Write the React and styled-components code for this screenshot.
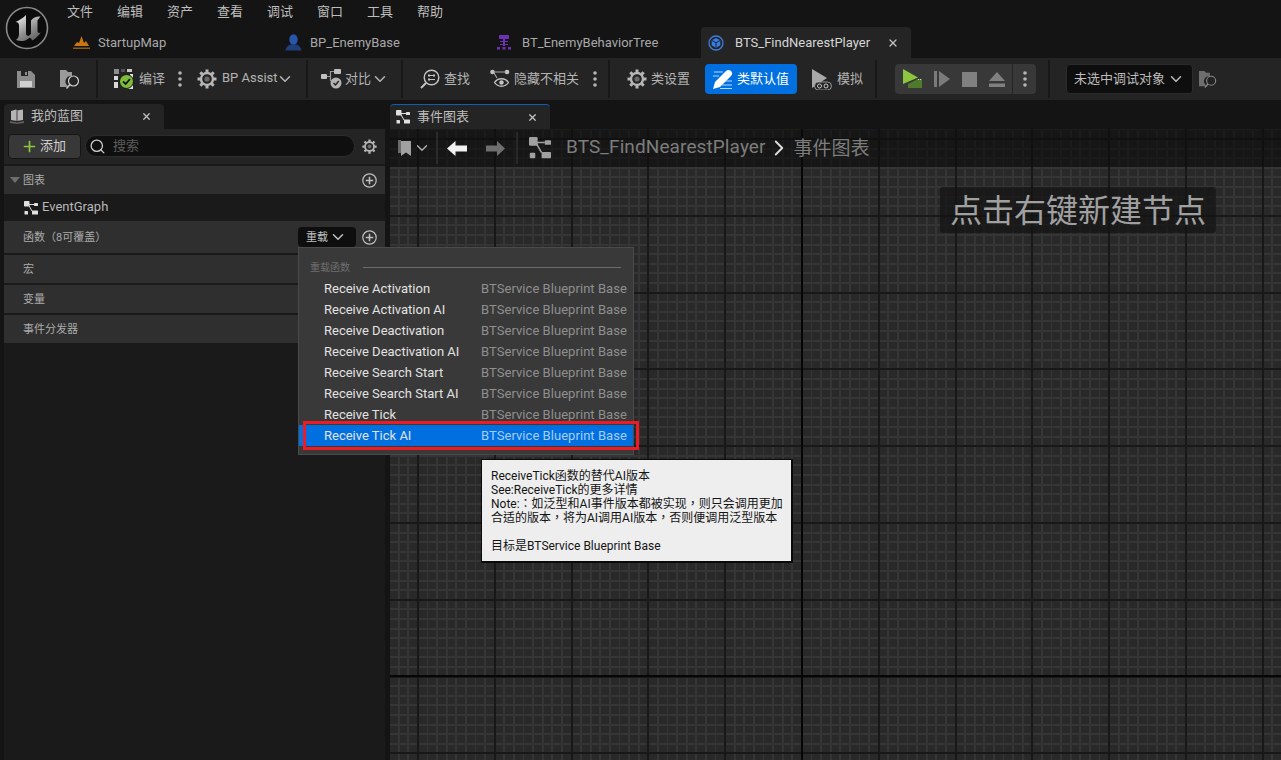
import React from "react";
import styled, { createGlobalStyle } from "styled-components";
import { X, ChevronDown, ChevronRight, Plus, Search } from "lucide-react";

const GlobalStyle = createGlobalStyle`
  html, body { margin: 0; padding: 0; background: #141414; }
  * { box-sizing: border-box; }
`;

const Page = styled.div`
  position: relative;
  width: 1281px;
  height: 760px;
  overflow: hidden;
  background: #141414;
  color: #c0c0c0;
  font-family: Roboto, "Noto Sans CJK SC", sans-serif;
  font-size: 13px;
  text-spacing-trim: space-all;
  display: flex;
  flex-direction: column;
`;

/* title area */
const TitleBar = styled.header`
  height: 58px;
  display: flex;
  flex: none;
`;
const LogoCell = styled.div`
  width: 65px;
  flex: none;
  padding: 6px 0 0 5px;
`;
const TitleRight = styled.div`
  display: flex;
  flex-direction: column;
`;
const MenuBar = styled.nav`
  height: 27px;
  display: flex;
  gap: 24px;
  padding: 0 0 6px 2px;
  align-items: center;
`;
const MenuItem = styled.span`
  font-size: 13px;
  color: #bdbdbd;
  width: 26px;
  white-space: nowrap;
`;
const DocTabs = styled.div`
  display: flex;
  gap: 2px;
  height: 31px;
`;
const DocTab = styled.div`
  width: 210px;
  display: flex;
  align-items: center;
  padding-left: ${(p) => (p.$active ? 7 : 8)}px;
  border-radius: 4px 4px 0 0;
  font-size: 13px;
  background: ${(p) => (p.$active ? "#242424" : "transparent")};
  color: ${(p) => (p.$active ? "#d6d6d6" : "#a8a8a8")};
  svg { flex: none; }
`;
const DocTabLabel = styled.span`
  margin-left: ${(p) => p.$gap || 8}px;
  white-space: nowrap;
  flex: 1;
`;
const CloseBtn = styled(X)`
  color: #c4c4c4;
  margin-right: ${(p) => p.$right || 0}px;
`;

/* toolbar */
const Toolbar = styled.div`
  height: 42px;
  flex: none;
  display: flex;
  background: #242424;
`;
const ToolSection = styled.div`
  width: ${(p) => p.$w}px;
  flex: ${(p) => (p.$grow ? "1" : "none")};
  padding-left: ${(p) => p.$pl}px;
  gap: ${(p) => p.$gap || 0}px;
  display: flex;
  align-items: center;
  border-right: ${(p) => (p.$grow ? "none" : "2px solid #181818")};
  margin: 2px 0;
`;
const ToolItem = styled.div`
  display: flex;
  align-items: center;
  gap: ${(p) => p.$gap ?? 4}px;
  margin-left: ${(p) => p.$ml || 0}px;
  color: #b4b4b4;
  font-size: 13px;
  white-space: nowrap;
  svg { flex: none; }
`;
const ToolLabel = styled.span`
  margin-bottom: 4px;
  white-space: nowrap;
`;
const ToolChevron = styled(ChevronDown)`
  margin-left: ${(p) => p.$ml || 0}px;
  flex: none;
`;
const DotsSlot = styled.span`
  display: flex;
  margin-left: ${(p) => p.$ml || 0}px;
`;
const ActiveButton = styled.div`
  width: 92px;
  height: 30px;
  border-radius: 4px;
  background: #0070e0;
  color: #fff;
  font-size: 13px;
  padding-left: 8px;
  display: flex;
  align-items: center;
  gap: 4px;
  white-space: nowrap;
`;
const PlayGroup = styled.div`
  width: 141px;
  height: 30px;
  background: #383838;
  border-radius: 4px;
  display: flex;
  align-items: center;
`;
const PlayIcons = styled.div`
  width: 118px;
  height: 100%;
  padding-left: 8px;
  display: flex;
  align-items: center;
  gap: 12px;
  border-right: 1px solid #242424;
`;
const PlayMore = styled.div`
  flex: 1;
  display: flex;
  justify-content: center;
`;
const DebugSelect = styled.div`
  width: 127px;
  height: 30px;
  background: #0e0e0e;
  border: 1px solid #2b2b2b;
  border-radius: 4px;
  padding-left: 7px;
  display: flex;
  align-items: center;
  gap: 4px;
  color: #bcbcbc;
  font-size: 13px;
  white-space: nowrap;
`;

/* main */
const Main = styled.div`
  flex: 1;
  display: flex;
  min-height: 0;
`;
const LeftColumn = styled.aside`
  width: 385px;
  flex: none;
  padding: 4px 0 0 4px;
  display: flex;
  flex-direction: column;
`;
const RightColumn = styled.section`
  flex: 1;
  margin-left: 5px;
  padding-top: 4px;
  display: flex;
  flex-direction: column;
  min-width: 0;
`;
const PanelTab = styled.div`
  width: 160px;
  height: 25px;
  flex: none;
  background: #242424;
  border-radius: 4px 4px 0 0;
  border-top: ${(p) => (p.$accent ? "1px solid #0b5fb8" : "none")};
  display: flex;
  align-items: center;
  padding-left: 6px;
  font-size: 13px;
  color: #bdbdbd;
  white-space: nowrap;
`;
const PanelTabLabel = styled.span`
  margin-left: ${(p) => p.$gap}px;
  margin-bottom: 4px;
  flex: 1;
`;
const PanelBody = styled.div`
  flex: 1;
  background: #1a1a1a;
  display: flex;
  flex-direction: column;
`;
const PanelToolbar = styled.div`
  height: 35px;
  background: #242424;
  padding: 0 8px 1px 4px;
  margin-bottom: 2px;
  display: flex;
  align-items: center;
  gap: 4px;
`;
const AddButton = styled.div`
  width: 73px;
  height: 25px;
  background: #383838;
  border: 1px solid #151515;
  border-radius: 4px;
  display: flex;
  align-items: center;
  padding-left: 12px;
  gap: 2px;
  font-size: 13px;
  color: #d0d0d0;
`;
const SearchBox = styled.div`
  flex: 1;
  height: 22px;
  background: #0f0f0f;
  border: 1px solid #2c2c2c;
  border-radius: 11px;
  display: flex;
  align-items: center;
  padding-left: 3px;
  gap: 7px;
  font-size: 13px;
  color: #5c5c5c;
`;
const SettingsSlot = styled.div`
  width: 15px;
  margin-left: 3px;
  display: flex;
  justify-content: center;
`;
const SectionRow = styled.div`
  height: ${(p) => p.$h || 28}px;
  margin-bottom: ${(p) => p.$mb || 0}px;
  background: #2f2f2f;
  display: flex;
  align-items: center;
  padding-left: ${(p) => p.$pl || 19}px;
  padding-right: 8px;
  font-size: 11px;
  color: #ababab;
`;
const SectionLabel = styled.span`
  flex: 1;
  margin-left: ${(p) => p.$ml || 0}px;
  margin-bottom: 2px;
  white-space: nowrap;
`;
const TreeRow = styled.div`
  height: 27px;
  display: flex;
  align-items: center;
  padding-left: 20px;
  gap: 4px;
  font-size: 13px;
  color: #b8b8b8;
`;
const TreeLabel = styled.span`
  margin-bottom: 2px;
`;
const OverrideButton = styled.div`
  width: 58px;
  height: 20px;
  background: #0e0e0e;
  border-radius: 4px;
  margin-right: 6px;
  display: flex;
  align-items: center;
  padding-left: 8px;
  gap: 3px;
  color: #c0c0c0;
  font-size: 11px;
  svg { flex: none; }
`;

/* graph */
const GraphCanvas = styled.div`
  position: relative;
  flex: 1;
  background-color: #292929;
  background-image:
    repeating-linear-gradient(90deg, transparent 0 411px, #060606 411px 413px, transparent 413px 614.4px),
    repeating-linear-gradient(180deg, transparent 0 546px, #060606 546px 548px, transparent 548px 614.4px),
    repeating-linear-gradient(90deg, transparent 0 27px, #181818 27px 29px, transparent 29px 76.8px),
    repeating-linear-gradient(180deg, transparent 0 9px, #181818 9px 11px, transparent 11px 76.8px),
    repeating-linear-gradient(90deg, transparent 0 7.8px, #353535 7.8px 9.6px),
    repeating-linear-gradient(180deg, #353535 0 1.4px, transparent 1.4px 9px, #353535 9px 9.6px);
`;
const Breadcrumb = styled.div`
  position: absolute;
  top: 0;
  left: 0;
  right: 0;
  height: 38px;
  background: rgba(12, 12, 12, 0.62);
  display: flex;
  align-items: center;
  padding-left: 8px;
  font-size: 19px;
  color: #7d7d7d;
  svg { flex: none; }
`;
const CrumbDivider = styled.span`
  width: 2px;
  height: 32px;
  background: rgba(60, 60, 60, 0.5);
  margin: 0 ${(p) => p.$r}px 0 ${(p) => p.$l}px;
`;
const CrumbText = styled.span`
  white-space: nowrap;
  margin-left: ${(p) => p.$ml || 0}px;
  margin-bottom: 4px;
  letter-spacing: ${(p) => p.$ls || 0}px;
`;
const CrumbCaret = styled(ChevronDown)`
  margin-left: 2px;
`;
const CrumbArrow = styled.svg`
  margin-left: ${(p) => p.$ml || 0}px;
`;
const CrumbChevron = styled(ChevronRight)`
  margin: 0 2px 0 0;
`;
const Hint = styled.div`
  position: absolute;
  top: 58px;
  right: 65px;
  height: 46px;
  width: 276px;
  padding-bottom: 4px;
  display: flex;
  align-items: center;
  justify-content: center;
  border-radius: 3px;
  background: rgba(20, 20, 20, 0.72);
  color: #a0a0a0;
  font-size: 32px;
  white-space: nowrap;
`;

/* override menu */
const Popup = styled.div`
  position: absolute;
  left: 298px;
  top: 247px;
  width: 336px;
  height: 208px;
  background: #393939;
  border: 1px solid #4a4a4a;
  display: flex;
  flex-direction: column;
`;
const PopupHeading = styled.div`
  height: 30px;
  flex: none;
  display: flex;
  align-items: center;
  padding: 6px 12px 0 11px;
  gap: 13px;
  font-size: 10px;
  color: #6e6e6e;
  white-space: nowrap;
`;
const HeadingRule = styled.span`
  flex: 1;
  height: 1px;
  margin-top: 2px;
  background: #6a6a6a;
`;
const PopupRow = styled.div`
  height: 21px;
  flex: none;
  display: flex;
  align-items: center;
  padding-left: 25px;
  background: ${(p) => (p.$selected ? "#0070e0" : "transparent")};
  font-size: 13px;
  white-space: nowrap;
`;
const RowName = styled.span`
  width: 157px;
  color: #e2e2e2;
`;
const RowOwner = styled.span`
  color: ${(p) => (p.$selected ? "#a8cdf5" : "#8f8f8f")};
  letter-spacing: 0.05px;
`;
const RedMark = styled.div`
  position: absolute;
  left: 4px;
  top: 173px;
  width: 336px;
  height: 29px;
  border: 3px solid #ed1c24;
  pointer-events: none;
`;
const Tip = styled.div`
  position: absolute;
  left: 481px;
  top: 459px;
  width: 312px;
  height: 104px;
  background: #eeeeee;
  border: 2px solid #0a0a0a;
  border-top-width: 1px;
  border-left-width: 1px;
  padding: 9px 0 0 9px;
  color: #141414;
  font-family: Roboto, "Noto Sans CJK TC", sans-serif;
  font-size: 12px;
  line-height: 14px;
  white-space: pre-line;
`;

/* drawn icons */
const LogoMark = () => (
  <svg width="44" height="44" viewBox="0 0 44 44">
    <defs>
      <linearGradient id="ueGrad" x1="0.2" y1="0" x2="0.8" y2="1">
        <stop offset="0" stopColor="#e8e8e8" />
        <stop offset="0.6" stopColor="#8c8c8c" />
        <stop offset="1" stopColor="#5c5c5c" />
      </linearGradient>
    </defs>
    <circle cx="22" cy="22" r="20.5" fill="#0c0c0c" stroke="#8a8a8a" strokeWidth="1.6" />
    <path
      d="M21 9C18 12 14 14.500 10.500 16C13 16 14 17.500 14 19.500L14 28C14 30.500 13 32.500 11 34C15 35.500 19 35.500 22 33.500L25 31.500L27.500 34.500C30.500 32.500 33.500 30 35.700 26.500C34 27.500 32.500 27 32.500 25L32.500 14.500L35.500 10.500C31.500 10 28.500 11.500 26 14.500L26 28L23.500 30C22 30 21 29 21 27.500Z"
      fill="url(#ueGrad)"
    />
  </svg>
);
const MapIcon = () => (
  <svg width="17" height="15" viewBox="0 0 17 15" fill="#c9780f">
    <path d="M1 11 L4 7 L6 8 L8.500 1 L11 8 L13 6 L16 11Z" />
    <rect x="0" y="12.500" width="17" height="1.500" fill="#8a5a14" />
  </svg>
);
const PawnIcon = () => (
  <svg width="17" height="17" viewBox="0 0 17 17" fill="#2756ad">
    <ellipse cx="8.500" cy="5.500" rx="4.200" ry="5.200" />
    <path d="M0.500 16.500C1 12.500 4 11 6 10.500L11 10.500C13 11 16 12.500 16.500 16.500Z" fill="#1f3f7c" />
  </svg>
);
const TreeIcon = () => (
  <svg width="14" height="15" viewBox="0 0 14 15" fill="#6d30b5">
    <rect x="2" y="0" width="10" height="4" />
    <rect x="6" y="4" width="2" height="7" />
    <path d="M3 6H11V7H3ZM3 9H11V10H3Z" />
    <rect x="0" y="12" width="3" height="2.500" />
    <rect x="5.500" y="12" width="3" height="2.500" />
    <rect x="11" y="12" width="3" height="2.500" />
  </svg>
);
const ServiceIcon = () => (
  <svg width="16" height="16" viewBox="0 0 16 16" fill="none">
    <circle cx="8" cy="8" r="7" stroke="#3c7de0" strokeWidth="1.300" />
    <path d="M8 3L12.300 5.300V10.300L8 13L3.700 10.300V5.300Z" fill="#3c7de0" />
    <path d="M4 5.500L8 7.800L12 5.500M8 7.800V12.800" stroke="#10233f" strokeWidth="1" />
  </svg>
);
const SaveIcon = () => (
  <svg width="18" height="18" viewBox="0 0 18 18">
    <path d="M0 1H14L18 5V18H0Z" fill="#8c8c8c" />
    <rect x="4" y="1" width="7" height="5" fill="#242424" />
    <rect x="8" y="2" width="2" height="3" fill="#8c8c8c" />
    <rect x="3" y="11" width="12" height="6" fill="#d0d0d0" />
  </svg>
);
const FolderSearchIcon = ({ size = 20, fill = "#9a9a9a", lens = "#d0d0d0" }) => (
  <svg width={size} height={size} viewBox="0 0 20 20" fill="none">
    <path d="M0 1H6L8 3H12V7A5.500 5.500 0 0 0 8 17L6 18H0Z" fill={fill} />
    <circle cx="13.500" cy="12" r="5" stroke={lens} strokeWidth="1.200" />
    <path d="M10 15.500L6.500 19.500" stroke={lens} strokeWidth="1.500" />
  </svg>
);
const CompileIcon = () => (
  <svg width="20" height="20" viewBox="0 0 20 20">
    <g fill="#8d8d8d">
      <rect x="0" y="0" width="5" height="5" />
      <rect x="13" y="0" width="5" height="3" fill="#c8c8c8" />
      <rect x="7" y="0" width="4" height="3" fill="#555" />
      <rect x="0" y="7" width="4" height="4" fill="#d8d8d8" />
      <rect x="0" y="13" width="4" height="6" fill="#d8d8d8" />
      <rect x="16" y="5" width="3" height="4" fill="#e0e0e0" />
      <rect x="13" y="16" width="6" height="4" fill="#e0e0e0" />
    </g>
    <circle cx="12.500" cy="12.500" r="7" fill="#7ebd3a" stroke="#111" strokeWidth="1" />
    <path d="M9 12.500L11.700 15L16 10" fill="none" stroke="#111" strokeWidth="1.800" />
  </svg>
);
const Dots = () => (
  <svg width="6" height="18" viewBox="0 0 6 18" fill="#b4b4b4">
    <circle cx="3" cy="3" r="1.800" />
    <circle cx="3" cy="9" r="1.800" />
    <circle cx="3" cy="15" r="1.800" />
  </svg>
);
const GearIcon = ({ size = 20, color = "#b6b6b6" }) => (
  <svg width={size} height={size} viewBox="0 0 20 20" fill="none">
    <circle cx="10" cy="10" r="6" stroke={color} strokeWidth="2.400" />
    <circle cx="10" cy="10" r="2.600" fill="#6a6a6a" />
    <g stroke={color} strokeWidth="3">
      <path d="M10 0.500V3.500M10 16.500V19.500M0.500 10H3.500M16.500 10H19.500M3.300 3.300L5.400 5.400M14.600 14.600L16.700 16.700M3.300 16.700L5.400 14.600M14.600 5.400L16.700 3.300" />
    </g>
  </svg>
);
const DiffIcon = () => (
  <svg width="21" height="20" viewBox="0 0 21 20" fill="none">
    <rect x="0" y="5" width="6" height="5" rx="1" fill="#c0c0c0" />
    <rect x="13" y="0" width="7" height="5" rx="1" fill="#c0c0c0" />
    <path d="M6 7.500H9.500V2.500H13M9.500 7.500V12" stroke="#9a9a9a" strokeWidth="1.200" />
    <circle cx="15" cy="14" r="5.500" fill="#b4b4b4" />
    <path d="M12.500 14L14.500 16L17.800 12" stroke="#242424" strokeWidth="1.500" />
  </svg>
);
const FindIcon = () => (
  <svg width="20" height="20" viewBox="0 0 20 20" fill="none">
    <circle cx="11.500" cy="8.500" r="7.300" stroke="#c4c4c4" strokeWidth="1.400" />
    <path d="M6 14L1 19" stroke="#c4c4c4" strokeWidth="2" />
    <path d="M8 5.500H10V7.500H8ZM13 5.500H15V7.500H13ZM8 9.500H10V11.500H8Z" fill="#c4c4c4" />
    <path d="M10 6.500H13M10 10.500H15" stroke="#c4c4c4" strokeWidth="1" />
  </svg>
);
const HideIcon = () => (
  <svg width="20" height="20" viewBox="0 0 20 20" fill="none">
    <circle cx="2.500" cy="3" r="2.300" fill="#c4c4c4" />
    <circle cx="17" cy="3" r="2.300" fill="#c4c4c4" />
    <path d="M2.500 3H17M4 4L7 9" stroke="#aaa" strokeWidth="1.100" />
    <path d="M4.500 13.500C8 8.500 15 8.500 18.500 13.500C15 18.500 8 18.500 4.500 13.500Z" stroke="#c4c4c4" strokeWidth="1.300" />
    <circle cx="11.500" cy="13.500" r="2.200" fill="#c4c4c4" />
  </svg>
);
const PencilIcon = () => (
  <svg width="20" height="20" viewBox="0 0 20 20" fill="none">
    <path d="M0 20L2 13L13 2C14.500 0.500 16.500 0.500 18 2C19.500 3.500 19.500 5.500 18 7L7 18Z" fill="#fff" />
    <path d="M1 3H10M0 7H6M12 12H19M9 16H19M7 19.500H19" stroke="#cfe3fa" strokeWidth="0.900" />
  </svg>
);
const SimIcon = () => (
  <svg width="20" height="21" viewBox="0 0 20 21">
    <path d="M0 0L15 9L0 19Z" fill="#a8a8a8" />
    <rect x="2.500" y="13" width="17" height="8" rx="4" fill="#242424" stroke="#b0b0b0" strokeWidth="0.800" />
    <circle cx="7.500" cy="17" r="2" fill="none" stroke="#c8c8c8" strokeWidth="1" />
    <circle cx="14" cy="17" r="2" fill="none" stroke="#c8c8c8" strokeWidth="1" />
  </svg>
);
const PlayIcon = () => (
  <svg width="19" height="20" viewBox="0 0 19 20">
    <path d="M0 0L15 8.500L0 15Z" fill="#8cc63f" />
    <path d="M5 15L15 10H19V19H5Z" fill="#4f7a2c" />
    <path d="M15 10.500H19" stroke="#cfe6a8" strokeWidth="1" strokeDasharray="1 1" />
  </svg>
);
const StepIcon = () => (
  <svg width="16" height="16" viewBox="0 0 16 16" fill="#7b7b7b">
    <rect x="0" y="0" width="3" height="16" />
    <path d="M5 0L16 8L5 16Z" />
  </svg>
);
const StopIcon = () => (
  <svg width="15" height="15" viewBox="0 0 15 15"><rect width="15" height="15" fill="#808080" /></svg>
);
const EjectIcon = () => (
  <svg width="16" height="15" viewBox="0 0 16 15" fill="#808080">
    <path d="M8 0L16 9H0Z" />
    <rect x="0" y="11.500" width="16" height="3.500" />
  </svg>
);
const BookIcon = () => (
  <svg width="14" height="15" viewBox="0 0 14 15">
    <path d="M1 2L6 0.500L7 1.500L13 0.500V11L7 12L1 11Z" fill="#b4b4b4" />
    <path d="M0 12L7 13.500L14 12V14L7 15L0 14Z" fill="#5e5e5e" />
    <path d="M7 1.500V12" stroke="#242424" strokeWidth="0.800" />
  </svg>
);
const GraphIcon = ({ size = 14, color = "#e0e0e0" }) => (
  <svg width={size} height={size} viewBox="0 0 14 14" fill="none">
    <path d="M4 3L8 10M5 3.500H10" stroke={color} strokeWidth="1" />
    <rect x="0" y="0" width="5.500" height="5.500" rx="0.800" fill={color} />
    <rect x="10" y="2" width="4" height="3" rx="0.600" fill={color} />
    <rect x="0.500" y="10" width="3.500" height="3.500" rx="0.600" fill={color} />
    <rect x="8" y="9.500" width="6" height="4" rx="0.600" fill={color} />
  </svg>
);
const AddCircle = () => (
  <svg width="15" height="15" viewBox="0 0 15 15" fill="none" stroke="#c0c0c0">
    <circle cx="7.500" cy="7.500" r="6.700" strokeWidth="1.200" />
    <path d="M7.500 3.800V11.200M3.800 7.500H11.200" strokeWidth="1.500" />
  </svg>
);
const Caret = () => (
  <svg width="10" height="6" viewBox="0 0 10 6"><path d="M0 0H10L5 6Z" fill="#6e6e6e" /></svg>
);
const Bookmark = () => (
  <svg width="13" height="16" viewBox="0 0 13 16">
    <rect x="0" y="0" width="3" height="13" fill="#6a6a6a" />
    <path d="M3 1H13V16L8 12.500L3 16Z" fill="#a0a0a0" />
  </svg>
);
const BlockArrowLeft = () => (
  <CrumbArrow width="20" height="15" viewBox="0 0 20 15">
    <path d="M0 7.500L8.500 0V4.500H20V10.500H8.500V15Z" fill="#f2f2f2" />
  </CrumbArrow>
);
const BlockArrowRight = () => (
  <CrumbArrow $ml={19} width="19" height="15" viewBox="0 0 19 15">
    <path d="M19 7.500L11 0V4.500H0V10.500H11V15Z" fill="#6f6f6f" />
  </CrumbArrow>
);

const menus = ["文件", "编辑", "资产", "查看", "调试", "窗口", "工具", "帮助"];
const overrides = [
  "Receive Activation",
  "Receive Activation AI",
  "Receive Deactivation",
  "Receive Deactivation AI",
  "Receive Search Start",
  "Receive Search Start AI",
  "Receive Tick",
  "Receive Tick AI",
];
const tipText = `ReceiveTick函数的替代AI版本
See:ReceiveTick的更多详情
Note:：如泛型和AI事件版本都被实现，则只会调用更加
合适的版本，将为AI调用AI版本，否则便调用泛型版本

目标是BTService Blueprint Base`;

export default function App() {
  return (
    <Page>
      <GlobalStyle />
      <TitleBar>
        <LogoCell><LogoMark /></LogoCell>
        <TitleRight>
          <MenuBar>
            {menus.map((m) => <MenuItem key={m}>{m}</MenuItem>)}
          </MenuBar>
          <DocTabs>
            <DocTab><MapIcon /><DocTabLabel>StartupMap</DocTabLabel></DocTab>
            <DocTab><PawnIcon /><DocTabLabel>BP_EnemyBase</DocTabLabel></DocTab>
            <DocTab><TreeIcon /><DocTabLabel $gap={11}>BT_EnemyBehaviorTree</DocTabLabel></DocTab>
            <DocTab $active>
              <ServiceIcon />
              <DocTabLabel $gap={11}>BTS_FindNearestPlayer</DocTabLabel>
              <CloseBtn size={12} strokeWidth={2.6} $right={12} />
            </DocTab>
          </DocTabs>
        </TitleRight>
      </TitleBar>

      <Toolbar>
        <ToolSection $w={98} $pl={17} $gap={25}>
          <SaveIcon />
          <FolderSearchIcon />
        </ToolSection>
        <ToolSection $w={210} $pl={16} $gap={12}>
          <ToolItem $gap={5}><CompileIcon /><ToolLabel>编译</ToolLabel></ToolItem>
          <Dots />
          <ToolItem $gap={5} $ml={2}>
            <GearIcon /><ToolLabel>BP Assist</ToolLabel><ToolChevron size={18} strokeWidth={2} $ml={-7} />
          </ToolItem>
        </ToolSection>
        <ToolSection $w={95} $pl={13}>
          <ToolItem $gap={3}><DiffIcon /><ToolLabel>对比</ToolLabel><ToolChevron size={18} strokeWidth={2} $ml={-3} /></ToolItem>
        </ToolSection>
        <ToolSection $w={207} $pl={17} $gap={20}>
          <ToolItem><FindIcon /><ToolLabel>查找</ToolLabel></ToolItem>
          <ToolItem><HideIcon /><ToolLabel>隐藏不相关</ToolLabel></ToolItem>
          <DotsSlot $ml={-7}><Dots /></DotsSlot>
        </ToolSection>
        <ToolSection $w={267} $pl={17} $gap={15}>
          <ToolItem><GearIcon /><ToolLabel>类设置</ToolLabel></ToolItem>
          <ActiveButton><PencilIcon /><ToolLabel>类默认值</ToolLabel></ActiveButton>
          <ToolItem $gap={5}><SimIcon /><ToolLabel>模拟</ToolLabel></ToolItem>
        </ToolSection>
        <ToolSection $w={173} $pl={18}>
          <PlayGroup>
            <PlayIcons>
              <PlayIcon /><StepIcon /><StopIcon /><EjectIcon />
            </PlayIcons>
            <PlayMore><Dots /></PlayMore>
          </PlayGroup>
        </ToolSection>
        <ToolSection $grow $pl={16} $gap={6}>
          <DebugSelect><ToolLabel>未选中调试对象</ToolLabel><ToolChevron size={18} strokeWidth={2} $ml={-2} /></DebugSelect>
          <FolderSearchIcon size={18} fill="#6e6e6e" lens="#8a8a8a" />
        </ToolSection>
      </Toolbar>

      <Main>
        <LeftColumn>
          <PanelTab>
            <BookIcon />
            <PanelTabLabel $gap={7}>我的蓝图</PanelTabLabel>
            <CloseBtn size={11} strokeWidth={2.6} $right={12} />
          </PanelTab>
          <PanelBody>
            <PanelToolbar>
              <AddButton><Plus size={17} strokeWidth={2.4} color="#8cc63f" /><ToolLabel>添加</ToolLabel></AddButton>
              <SearchBox><Search size={17} strokeWidth={1.8} color="#d0d0d0" /><ToolLabel>搜索</ToolLabel></SearchBox>
              <SettingsSlot><GearIcon size={15} /></SettingsSlot>
            </PanelToolbar>
            <SectionRow $pl={6}>
              <Caret />
              <SectionLabel $ml={3}>图表</SectionLabel>
              <AddCircle />
            </SectionRow>
            <TreeRow><GraphIcon /><TreeLabel>EventGraph</TreeLabel></TreeRow>
            <SectionRow $h={32} $mb={2}>
              <SectionLabel>函数（8可覆盖）</SectionLabel>
              <OverrideButton><TreeLabel>重载</TreeLabel><ToolChevron size={18} strokeWidth={2} $ml={-2} /></OverrideButton>
              <AddCircle />
            </SectionRow>
            <SectionRow $mb={2}><SectionLabel>宏</SectionLabel></SectionRow>
            <SectionRow $mb={2}><SectionLabel>变量</SectionLabel></SectionRow>
            <SectionRow><SectionLabel>事件分发器</SectionLabel></SectionRow>
          </PanelBody>
        </LeftColumn>

        <RightColumn>
          <PanelTab $accent>
            <GraphIcon />
            <PanelTabLabel $gap={7}>事件图表</PanelTabLabel>
            <CloseBtn size={11} strokeWidth={2.6} $right={12} />
          </PanelTab>
          <GraphCanvas>
            <Breadcrumb>
              <Bookmark />
              <CrumbCaret size={18} strokeWidth={1.8} color="#b0b0b0" />
              <CrumbDivider $l={5} $r={9} />
              <BlockArrowLeft />
              <BlockArrowRight />
              <CrumbDivider $l={11} $r={11} />
              <GraphIcon size={22} color="#a0a0a0" />
              <CrumbText $ml={15} $ls={0.1}>BTS_FindNearestPlayer</CrumbText>
              <CrumbChevron size={26} strokeWidth={1.7} color="#e0e0e0" />
              <CrumbText>事件图表</CrumbText>
            </Breadcrumb>
            <Hint>点击右键新建节点</Hint>
          </GraphCanvas>
        </RightColumn>
      </Main>

      <Popup>
        <PopupHeading>重载函数<HeadingRule /></PopupHeading>
        {overrides.map((name, i) => {
          const selected = i === overrides.length - 1;
          return (
            <PopupRow key={name} $selected={selected}>
              <RowName>{name}</RowName>
              <RowOwner $selected={selected}>BTService Blueprint Base</RowOwner>
            </PopupRow>
          );
        })}
        <RedMark />
      </Popup>
      <Tip>{tipText}</Tip>
    </Page>
  );
}
